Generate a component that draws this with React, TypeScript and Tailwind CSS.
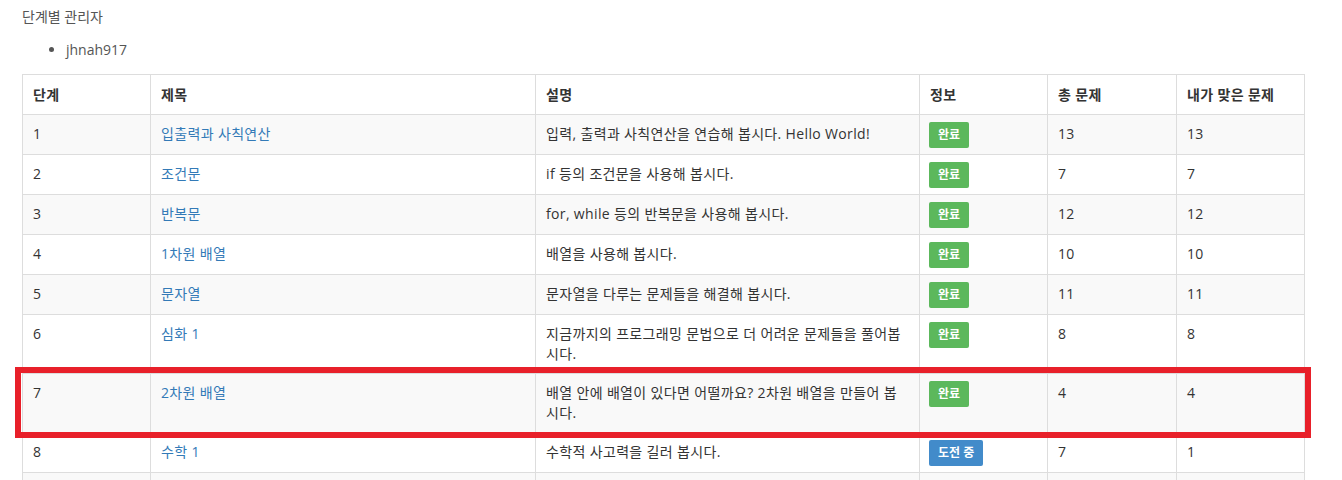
const rows = [
  { n: 1, title: "입출력과 사칙연산", desc: "입력, 출력과 사칙연산을 연습해 봅시다. Hello World!", done: true, total: 13, mine: 13 },
  { n: 2, title: "조건문", desc: "if 등의 조건문을 사용해 봅시다.", done: true, total: 7, mine: 7 },
  { n: 3, title: "반복문", desc: "for, while 등의 반복문을 사용해 봅시다.", done: true, total: 12, mine: 12 },
  { n: 4, title: "1차원 배열", desc: "배열을 사용해 봅시다.", done: true, total: 10, mine: 10 },
  { n: 5, title: "문자열", desc: "문자열을 다루는 문제들을 해결해 봅시다.", done: true, total: 11, mine: 11 },
  { n: 6, title: "심화 1", desc: "지금까지의 프로그래밍 문법으로 더 어려운 문제들을 풀어봅시다.", done: true, total: 8, mine: 8 },
  { n: 7, title: "2차원 배열", desc: "배열 안에 배열이 있다면 어떨까요? 2차원 배열을 만들어 봅시다.", done: true, total: 4, mine: 4 },
  { n: 8, title: "수학 1", desc: "수학적 사고력을 길러 봅시다.", done: false, total: 7, mine: 1 },
  { n: 9, title: "정렬", desc: "", done: false, total: 0, mine: 0 },
];

function Badge({ done }: { done: boolean }) {
  if (done) {
    return (
      <span className="inline-block rounded-[2px] bg-[#5cb85c] px-[9px] text-[12px] leading-[26px] font-bold text-white">
        완료
      </span>
    );
  }
  return (
    <span className="inline-block rounded-[2px] bg-[#428bca] px-[9px] text-[12px] leading-[26px] font-bold text-white">
      도전 중
    </span>
  );
}

export default function App() {
  return (
    <div className="h-[480px] overflow-hidden bg-white pt-[7px] pr-[37px] pl-[22px] font-['Open_Sans','Noto_Sans_CJK_KR',sans-serif] text-[14px] leading-[20px] text-[#333]">
      <p className="text-[#555]">단계별 관리자</p>
      <ul className="mt-[13px] mb-[14px] list-disc pl-[44px] text-[#555]">
        <li>jhnah917</li>
      </ul>
      <div className="relative">
        <table className="w-full table-fixed border-collapse border border-[#ddd] tracking-[0.35px]">
          <colgroup>
            <col className="w-[128px]" />
            <col className="w-[385px]" />
            <col className="w-[384px]" />
            <col className="w-[128px]" />
            <col className="w-[129px]" />
            <col />
          </colgroup>
          <thead>
            <tr>
              {["단계", "제목", "설명", "정보", "총 문제", "내가 맞은 문제"].map((h) => (
                <th key={h} className="border border-[#ddd] px-[10px] pt-[10px] pb-[9px] text-left font-bold text-[#333]">
                  {h}
                </th>
              ))}
            </tr>
          </thead>
          <tbody>
            {rows.map((r, i) => (
              <tr key={r.n} className={i % 2 === 0 ? "bg-[#f9f9f9]" : "bg-white"}>
                <td className="border border-[#ddd] px-[10px] py-[9px] align-top">{r.n}</td>
                <td className="border border-[#ddd] px-[10px] py-[9px] align-top">
                  <a className="text-[#337ab7]">{r.title}</a>
                </td>
                <td className="border border-[#ddd] px-[10px] py-[9px] align-top">{r.desc}</td>
                <td className="border border-[#ddd] px-[9px] pt-[7px] pb-[6px] align-top tracking-normal">
                  <Badge done={r.done} />
                </td>
                <td className="border border-[#ddd] px-[10px] py-[9px] align-top">{r.total}</td>
                <td className="border border-[#ddd] px-[10px] py-[9px] align-top">{r.mine}</td>
              </tr>
            ))}
          </tbody>
        </table>
        <div className="pointer-events-none absolute top-[293px] left-[-7px] h-[71px] w-[1296px] border-[6px] border-[#e8202a]" />
      </div>
    </div>
  );
}
